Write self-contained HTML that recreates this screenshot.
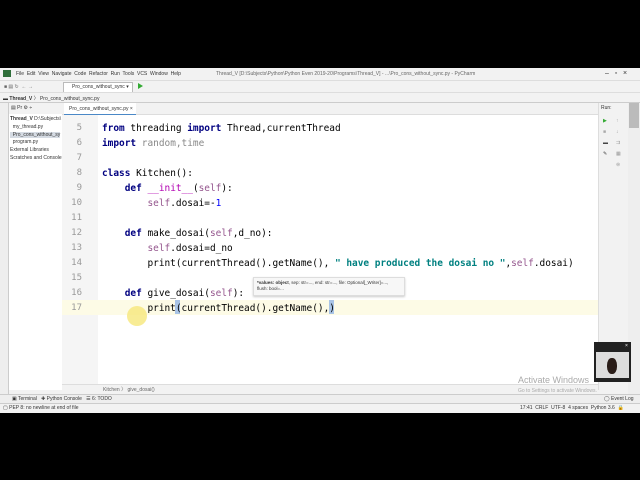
<!DOCTYPE html><html><head><style>
body{margin:0;width:640px;height:480px;background:#000;position:relative;overflow:hidden;font-family:"Liberation Sans",sans-serif}
.a{position:absolute}
.s{font-size:5px;color:#333;white-space:nowrap}
.code{position:absolute;left:0;font-family:"DejaVu Sans Mono","Liberation Mono",monospace;font-size:9.45px;white-space:pre;color:#000;line-height:15px}
.ln{position:absolute;left:62px;width:20px;text-align:right;font-family:"DejaVu Sans Mono",monospace;font-size:9px;color:#999;line-height:15px}
.k{color:#000080;font-weight:bold}.g{color:#94558d}.t{color:#008080;font-weight:bold}.n{color:#0000ff}.m{color:#b200b2}
</style></head><body>
<div class="a" style="left:0;top:68px;width:640px;height:344px;background:#f2f2f2"></div>
<div class="a s" style="left:3px;top:70px;width:8px;height:7px;background:#2f6e3a"></div>
<div class="a s" style="left:16px;top:71px">File&nbsp; Edit&nbsp; View&nbsp; Navigate&nbsp; Code&nbsp; Refactor&nbsp; Run&nbsp; Tools&nbsp; VCS&nbsp; Window&nbsp; Help</div>
<div class="a s" style="left:216px;top:71px;color:#666">Thread_V [D:\Subjects\Python\Python Even 2019-20\Programs\Thread_V] - ...\Pro_cons_without_sync.py - PyCharm</div>
<div class="a s" style="left:605px;top:70px;font-size:7px">–&nbsp;&nbsp; ▫&nbsp;&nbsp; ×</div>
<div class="a" style="left:0;top:80px;width:640px;height:1px;background:#ddd"></div>
<div class="a" style="left:63px;top:82px;width:68px;height:9px;border:1px solid #bbb;background:#fff"></div>
<div class="a s" style="left:72px;top:84px">Pro_cons_without_sync ▾</div>
<div class="a" style="left:138px;top:83px;width:0;height:0;border-left:5px solid #3a3;border-top:3px solid transparent;border-bottom:3px solid transparent"></div>
<div class="a s" style="left:4px;top:84px;color:#666">■ ▤ ↻ &nbsp;← →</div>
<div class="a" style="left:0;top:92px;width:640px;height:1px;background:#ddd"></div>
<div class="a s" style="left:3px;top:95px"><b>▬ Thread_V</b> 〉 Pro_cons_without_sync.py</div>
<div class="a" style="left:0;top:102px;width:640px;height:1px;background:#ccc"></div>
<div class="a" style="left:0;top:103px;width:8px;height:309px;background:#eee;border-right:1px solid #ccc"></div>
<div class="a" style="left:9px;top:103px;width:53px;height:287px;background:#fff"></div>
<div class="a" style="left:9px;top:103px;width:53px;height:11px;background:#f2f2f2"></div>
<div class="a s" style="left:11px;top:105px">▤ Pr ⚙ ÷</div>
<div class="a s" style="left:10px;top:116px;line-height:7.8px"><b>Thread_V</b> D:\Subjects\<br>&nbsp;&nbsp;my_thread.py<br><span style="background:#d5dbe3">&nbsp;&nbsp;Pro_cons_without_sy</span><br>&nbsp;&nbsp;program.py<br>External Libraries<br>Scratches and Consoles</div>
<div class="a" style="left:62px;top:103px;width:536px;height:11px;background:#f2f2f2;border-bottom:1px solid #ddd"></div>
<div class="a" style="left:64px;top:103px;width:72px;height:11px;background:#fff;border-bottom:2px solid #4a88c7"></div>
<div class="a s" style="left:69px;top:106px">Pro_cons_without_sync.py ×</div>
<div class="a" style="left:62px;top:115px;width:536px;height:270px;background:#fff"></div>
<div class="a" style="left:62px;top:115px;width:36px;height:270px;background:#f5f5f5"></div>
<div class="a" style="left:62px;top:300px;width:536px;height:15px;background:#fdfbe6"></div>
<div class="a" style="left:175px;top:300px;width:5px;height:14px;background:#a9c4e6"></div>
<div class="a" style="left:329px;top:300px;width:5px;height:14px;background:#a9c4e6"></div>
<div class="a" style="left:127px;top:306px;width:20px;height:20px;border-radius:50%;background:#f6e77a;opacity:.8"></div>
<div class="ln" style="top:121px">5<br>6<br>7<br>8<br>9<br>10<br>11<br>12<br>13<br>14<br>15<br>16<br>17</div>
<div class="a" style="left:102px;top:121px;width:496px">
<div class="code" style="top:0"><span class="k">from</span> threading <span class="k">import</span> Thread,currentThread
<span class="k">import</span> <span style="color:#888">random,time</span>

<span class="k">class</span> Kitchen():
    <span class="k">def</span> <span class="m">__init__</span>(<span class="g">self</span>):
        <span class="g">self</span>.dosai=-<span class="n">1</span>

    <span class="k">def</span> make_dosai(<span class="g">self</span>,d_no):
        <span class="g">self</span>.dosai=d_no
        print(currentThread().getName(), <span class="t">" have produced the dosai no "</span>,<span class="g">self</span>.dosai)

    <span class="k">def</span> give_dosai(<span class="g">self</span>):
        print(currentThread().getName(),)</div></div>
<div class="a" style="left:253px;top:277px;width:150px;height:17px;background:#f7f7f7;border:1px solid #ddd;box-shadow:0 1px 2px #ccc"></div>
<div class="a s" style="left:257px;top:280px;font-size:4.5px;line-height:6px"><b>*values: object</b>, sep: str=..., end: str=..., file: Optional[_Writer]=...,<br>flush: bool=...</div>
<div class="a" style="left:600px;top:118px;width:6px;height:6px;background:#e8c400"></div>
<div class="a" style="left:598px;top:103px;width:30px;height:287px;background:#f2f2f2;border-left:1px solid #ddd"></div>
<div class="a s" style="left:601px;top:105px">Run:</div>
<div class="a s" style="left:603px;top:116px;line-height:11px;color:#3a3">▶<br><span style="color:#aaa">■</span><br><span style="color:#444">▬<br>✎</span></div>
<div class="a s" style="left:616px;top:116px;line-height:11px;color:#999">↑<br>↓<br>⇉<br>▦<br>⊜</div>
<div class="a" style="left:628px;top:103px;width:12px;height:300px;background:#eee"></div>
<div class="a" style="left:629px;top:103px;width:10px;height:25px;background:#bbb"></div>
<div class="a" style="left:62px;top:384px;width:536px;height:10px;background:#f2f2f2;border-top:1px solid #ddd"></div>
<div class="a s" style="left:103px;top:386px;color:#666">Kitchen 〉 give_dosai()</div>
<div class="a" style="left:0;top:394px;width:640px;height:9px;background:#eee;border-top:1px solid #ccc"></div>
<div class="a s" style="left:12px;top:396px">▣ Terminal &nbsp;&nbsp;✚ Python Console &nbsp;&nbsp;☰ 6: TODO</div>
<div class="a s" style="left:604px;top:396px">◯ Event Log</div>
<div class="a" style="left:0;top:403px;width:640px;height:9px;background:#f2f2f2;border-top:1px solid #ccc"></div>
<div class="a s" style="left:3px;top:405px">▢ PEP 8: no newline at end of file</div>
<div class="a s" style="left:520px;top:405px">17:41&nbsp; CRLF&nbsp; UTF-8&nbsp; 4 spaces&nbsp; Python 3.6 &nbsp;🔒</div>
<div class="a" style="left:518px;top:375px;font-size:9px;color:#aaa">Activate Windows</div>
<div class="a s" style="left:518px;top:388px;color:#aaa;font-size:5px">Go to Settings to activate Windows.</div>
<div class="a" style="left:594px;top:342px;width:37px;height:40px;background:#222"></div>
<div class="a" style="left:596px;top:352px;width:33px;height:26px;background:#ddd"></div>
<div class="a" style="left:607px;top:358px;width:10px;height:16px;border-radius:45%;background:#2a1d18"></div>
<div class="a s" style="left:625px;top:343px;color:#fff">×</div>
</body></html>
